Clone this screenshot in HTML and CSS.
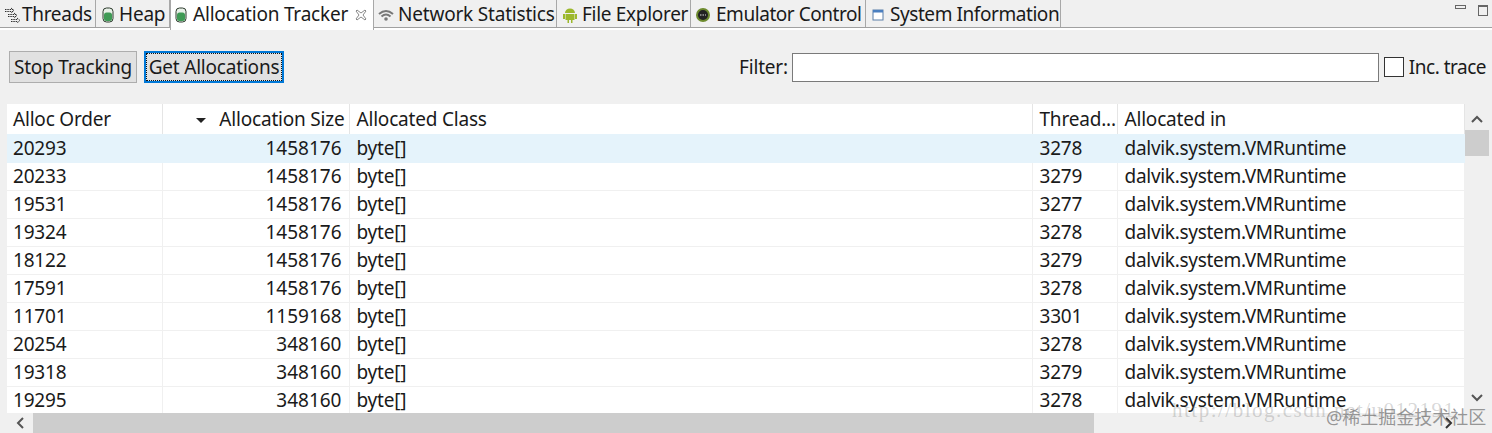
FILE: index.html
```html
<!DOCTYPE html>
<html lang="en">
<head>
    <meta charset="UTF-8">
    <meta name="viewport" content="width=device-width, initial-scale=1.0">
    <title>Allocation Tracker</title>
    <link rel="stylesheet" href="styles.css">
</head>
<body>
    <header class="tab-bar">
        <ul class="tabs">
            <li class="tab tab-threads">
                <svg class="icon" viewBox="0 0 18 16"><path d="M2 2.500h8M2 4.500h8M8 1l3 2.500L8 6M5 7.500h8M5 9.500h8M11 6l3 2.500-3 2.500M8 12.500h7M8 14.500h7M14 11l3 2.500-3 2.500" fill="none" stroke="#333" stroke-width="1" stroke-dasharray="1.500 0.800"/></svg>
                <span>Threads</span>
            </li>
            <li class="tab tab-heap">
                <svg class="icon" viewBox="0 0 16 16"><rect x="3" y="1" width="10" height="14" rx="3.500" fill="#e8f0e8" stroke="#2c3a2c"/><rect x="4" y="5.500" width="8" height="8.500" rx="2.500" fill="#3f9a55"/></svg>
                <span>Heap</span>
            </li>
            <li class="tab tab-active tab-alloc">
                <svg class="icon" viewBox="0 0 16 16"><rect x="3" y="1" width="10" height="14" rx="3.500" fill="#e8f0e8" stroke="#2c3a2c"/><rect x="4" y="5.500" width="8" height="8.500" rx="2.500" fill="#3f9a55"/></svg>
                <span>Allocation Tracker</span>
                <svg class="close" viewBox="0 0 12 12"><path d="M2 1l4 3 4-3 1 1-3 4 3 4-1 1-4-3-4 3-1-1 3-4-3-4z" fill="#fff" stroke="#888"/></svg>
            </li>
            <li class="tab tab-network">
                <svg class="icon" viewBox="0 0 16 16"><path d="M1 7q7-6 14 0M3.500 9.500q4.500-4 9 0" fill="none" stroke="#777" stroke-width="2"/><circle cx="8" cy="12" r="1.800" fill="#777"/></svg>
                <span>Network Statistics</span>
            </li>
            <li class="tab tab-files">
                <svg class="icon" viewBox="0 0 16 16"><path d="M3 6a5 4.500 0 0 1 10 0z M1 7h2v5H1z M13 7h2v5h-2z M3.500 7h9v6h-2v3H9v-3H7v3H5.500v-3h-2z" fill="#9cb82c"/></svg>
                <span>File Explorer</span>
            </li>
            <li class="tab tab-emulator">
                <svg class="icon" viewBox="0 0 16 16"><circle cx="8" cy="8" r="7" fill="#6d8a2e"/><circle cx="8" cy="8" r="5" fill="#222"/><path d="M5 8h6" stroke="#ddd" stroke-width="1.200" stroke-dasharray="1.500 1"/></svg>
                <span>Emulator Control</span>
            </li>
            <li class="tab tab-system">
                <svg class="icon icon-sm" viewBox="0 0 12 12"><rect x="1" y="1" width="10" height="10" fill="#fff" stroke="#5b7fa8"/><rect x="1" y="1" width="10" height="2.500" fill="#4a7fc0"/></svg>
                <span>System Information</span>
            </li>
        </ul>
        <div class="view-controls">
            <span class="minimize"></span>
            <span class="maximize"></span>
        </div>
    </header>

    <main class="panel">
        <div class="toolbar">
            <button class="btn btn-stop">Stop Tracking</button>
            <button class="btn btn-focus">Get Allocations</button>
            <div class="filter">
                <label for="filter">Filter:</label>
                <input type="text" id="filter">
                <span class="checkbox"></span>
                <span class="trace-label">Inc. trace</span>
            </div>
        </div>

        <div class="table-area">
            <table class="alloc-table">
                <colgroup>
                    <col class="col-order">
                    <col class="col-size">
                    <col class="col-class">
                    <col class="col-thread">
                    <col class="col-where">
                </colgroup>
                <thead>
                    <tr>
                        <th class="first">Alloc Order</th>
                        <th class="num"><span class="sort-arrow"></span>Allocation Size</th>
                        <th>Allocated Class</th>
                        <th>Thread...</th>
                        <th>Allocated in</th>
                    </tr>
                </thead>
                <tbody>
                    <tr class="selected"><td class="first">20293</td><td class="num">1458176</td><td>byte[]</td><td>3278</td><td class="where">dalvik.system.VMRuntime</td></tr>
                    <tr><td class="first">20233</td><td class="num">1458176</td><td>byte[]</td><td>3279</td><td class="where">dalvik.system.VMRuntime</td></tr>
                    <tr><td class="first">19531</td><td class="num">1458176</td><td>byte[]</td><td>3277</td><td class="where">dalvik.system.VMRuntime</td></tr>
                    <tr><td class="first">19324</td><td class="num">1458176</td><td>byte[]</td><td>3278</td><td class="where">dalvik.system.VMRuntime</td></tr>
                    <tr><td class="first">18122</td><td class="num">1458176</td><td>byte[]</td><td>3279</td><td class="where">dalvik.system.VMRuntime</td></tr>
                    <tr><td class="first">17591</td><td class="num">1458176</td><td>byte[]</td><td>3278</td><td class="where">dalvik.system.VMRuntime</td></tr>
                    <tr><td class="first">11701</td><td class="num">1159168</td><td>byte[]</td><td>3301</td><td class="where">dalvik.system.VMRuntime</td></tr>
                    <tr><td class="first">20254</td><td class="num">348160</td><td>byte[]</td><td>3278</td><td class="where">dalvik.system.VMRuntime</td></tr>
                    <tr><td class="first">19318</td><td class="num">348160</td><td>byte[]</td><td>3279</td><td class="where">dalvik.system.VMRuntime</td></tr>
                    <tr><td class="first">19295</td><td class="num">348160</td><td>byte[]</td><td>3278</td><td class="where">dalvik.system.VMRuntime</td></tr>
                </tbody>
            </table>
            <div class="vscroll">
                <svg class="arrow" viewBox="0 0 12 8"><path d="M1 7l5-5 5 5" fill="none" stroke="#555" stroke-width="2"/></svg>
                <div class="vthumb"></div>
                <svg class="arrow arrow-end" viewBox="0 0 12 8"><path d="M1 1l5 5 5-5" fill="none" stroke="#555" stroke-width="2"/></svg>
            </div>
        </div>

        <div class="hscroll">
            <svg class="harrow" viewBox="0 0 8 12"><path d="M7 1L2 6l5 5" fill="none" stroke="#555" stroke-width="2"/></svg>
            <div class="hthumb"></div>
            <svg class="harrow" viewBox="0 0 8 12"><path d="M1 1l5 5-5 5" fill="none" stroke="#333" stroke-width="2"/></svg>
        </div>
    </main>

    <div class="mark-url">http://blog.csdn.net/u012191</div>
    <div class="mark-site">@稀土掘金技术社区</div>
</body>
</html>
```

FILE: styles.css
```css
html, body {
    margin: 0;
    padding: 0;
    height: 433px;
    overflow: hidden;
}

body {
    font-family: "Noto Sans", "Noto Sans CJK SC", sans-serif;
    font-size: 19px;
    letter-spacing: -0.2px;
    color: #1a1a1a;
    background-color: #f0f0f0;
    position: relative;
}

/* Tab bar */
.tab-bar {
    display: flex;
    justify-content: space-between;
    height: 27px;
    border-bottom: 1px solid #a0a0a0;
    background: #f0f0f0;
}

.tabs {
    list-style: none;
    display: flex;
    margin: 0;
    padding: 0;
    height: 27px;
}

.tab {
    display: flex;
    align-items: center;
    box-sizing: border-box;
    height: 27px;
    padding-top: 2px;
    padding-left: 4px;
    border-right: 1px solid #a8a8a8;
    white-space: nowrap;
    line-height: 25px;
}

.tab-threads { width: 96px; padding-left: 3px; }
.tab-threads span { letter-spacing: -0.3px; }
.tab-heap { width: 74px; padding-left: 4px; }
.tab-heap .icon { margin-right: 3px; }
.tab-alloc { width: 204px; padding-left: 2px; }
.tab-network { width: 183px; padding-left: 4px; }
.tab-files { width: 134px; padding-left: 5px; }
.tab-files span { letter-spacing: -0.3px; }
.tab-emulator { width: 175px; padding-left: 4px; }
.tab-emulator .icon { margin-right: 5px; }
.tab-emulator span { letter-spacing: -0.45px; }
.tab-system { width: 195px; padding-left: 5px; }
.tab-system span { letter-spacing: -0.43px; }

.tab-active {
    background: #fff;
    height: 30px;
    padding-bottom: 3px;
    border-left: 1px solid #a8a8a8;
    position: relative;
    z-index: 1;
}

.icon {
    width: 16px;
    height: 16px;
    margin-right: 4px;
    flex: none;
}

.tab-threads .icon {
    width: 18px;
    margin-right: 1px;
}

.icon-sm {
    width: 12px;
    height: 12px;
    margin: 0 6px 0 1px;
}

.close {
    width: 12px;
    height: 12px;
    margin-left: 7px;
    flex: none;
}

.view-controls {
    display: flex;
    align-items: flex-start;
    gap: 12px;
    padding: 5px 4px 0 0;
}

.minimize {
    width: 9px;
    height: 2px;
    border: 1px solid #666;
}

.maximize {
    width: 8px;
    height: 8px;
    border: 1px solid #666;
    border-top-width: 2px;
}

/* Panel */
.panel {
    border-top: 2px solid #fff;
    background: #f0f0f0;
}

.toolbar {
    display: flex;
    align-items: center;
    gap: 7px;
    padding: 21px 6px 0 9px;
    height: 32px;
}

.btn {
    font: inherit;
    letter-spacing: inherit;
    color: inherit;
    height: 32px;
    padding: 0;
    background: #e1e1e1;
    border: 1px solid #adadad;
    white-space: nowrap;
}

.btn-stop {
    width: 128px;
}

.btn-focus {
    width: 140px;
    border: 2px solid #0078d7;
    outline: 1px dotted #111;
    outline-offset: -3px;
}

.filter {
    display: flex;
    align-items: center;
    margin-left: auto;
}

.filter input {
    box-sizing: border-box;
    width: 587px;
    height: 29px;
    margin: 0 5px 0 4px;
    border: 1px solid #7a7a7a;
    background: #fff;
}

.checkbox {
    box-sizing: border-box;
    width: 20px;
    height: 20px;
    margin-right: 5px;
    border: 1px solid #333;
    background: #fff;
}

.trace-label {
    letter-spacing: -0.5px;
}

/* Table */
.table-area {
    display: flex;
    margin: 21px 0 0 7px;
    height: 309px;
    overflow: hidden;
}

.alloc-table {
    border-collapse: collapse;
    table-layout: fixed;
    width: 1457px;
    height: 0;
    background: #fff;
}

.col-order { width: 155px; }
.col-size { width: 187px; }
.col-class { width: 683px; }
.col-thread { width: 85px; }
.col-where { width: 347px; }

.alloc-table th {
    box-sizing: border-box;
    height: 30px;
    padding: 0 6px 0 7px;
    font-weight: normal;
    text-align: left;
    border-right: 1px solid #e5e5e5;
    white-space: nowrap;
}

.alloc-table td {
    box-sizing: border-box;
    height: 28px;
    padding: 0 6px 0 7px;
    border-right: 1px solid #f0f0f0;
    border-bottom: 1px solid #f0f0f0;
    white-space: nowrap;
}

.alloc-table .first {
    padding-left: 6px;
}

.alloc-table .where {
    letter-spacing: -0.29px;
}

.alloc-table th.num,
.alloc-table td.num {
    text-align: right;
}

.alloc-table th.num {
    padding-right: 4px;
}

.alloc-table td.num {
    padding-right: 7px;
    letter-spacing: 0;
}

.selected td {
    background: #e5f3fb;
    border-right-color: #e5f3fb;
    border-bottom-color: #e5f3fb;
}

.sort-arrow {
    display: inline-block;
    width: 0;
    height: 0;
    margin: 0 13px 3px 0;
    border-left: 5px solid transparent;
    border-right: 5px solid transparent;
    border-top: 5px solid #222;
}

.vscroll {
    display: flex;
    flex-direction: column;
    align-items: center;
    width: 24px;
}

.arrow {
    width: 12px;
    height: 8px;
    margin: 11px 0 7px;
    flex: none;
}

.arrow-end {
    margin: auto 0 11px;
}

.vthumb {
    width: 24px;
    height: 26px;
    background: #cdcdcd;
}

.hscroll {
    display: flex;
    align-items: center;
    height: 20px;
    width: 1464px;
    padding: 0 11px 0 16px;
    box-sizing: border-box;
}

.harrow {
    width: 8px;
    height: 12px;
    flex: none;
}

.hthumb {
    width: 1061px;
    height: 20px;
    margin: 0 auto 0 9px;
    background: #cdcdcd;
}

/* Watermarks over the table */
.mark-url {
    position: absolute;
    left: 1172px;
    top: 398px;
    font-family: "Liberation Serif", serif;
    font-size: 21px;
    letter-spacing: 1.5px;
    color: rgba(120, 120, 120, 0.3);
    white-space: nowrap;
}

.mark-site {
    position: absolute;
    left: 1326px;
    top: 405px;
    font-size: 18px;
    letter-spacing: 0;
    line-height: 24px;
    color: rgba(110, 110, 110, 0.7);
    white-space: nowrap;
}
```
